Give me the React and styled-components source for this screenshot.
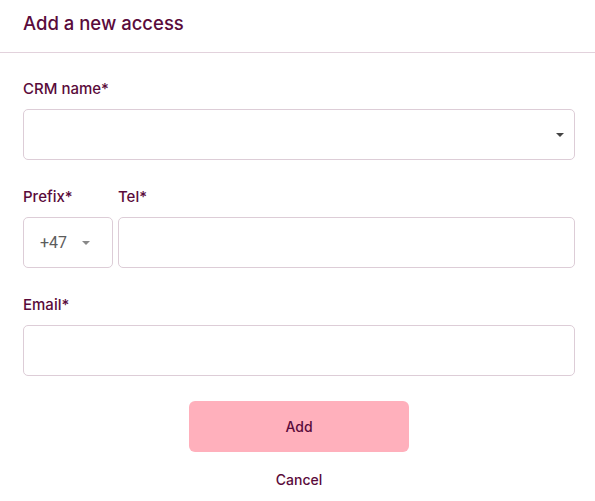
import React from "react";
import styled, { createGlobalStyle } from "styled-components";

const GlobalStyle = createGlobalStyle`
	body {
		margin: 0;
		background: #ffffff;
		font-family: Inter, "Liberation Sans", sans-serif;
	}
`;

const Header = styled.div`
	height: 53px;
	box-sizing: border-box;
	padding: 11px 23px 0;
	border-bottom: 1px solid #e2d2dc;
`;

const Title = styled.h2`
	margin: 0;
	font-size: 18.5px;
	line-height: 24px;
	font-weight: 500;
	color: #5a0b3b;
`;

const Form = styled.form`
	padding: 27px 20px 0 23px;
`;

const Field = styled.div`
	margin-bottom: 28px;
`;

const Row = styled.div`
	display: flex;
	gap: 5px;
	margin-bottom: 28px;
`;

const Label = styled.label`
	display: block;
	font-size: 15px;
	line-height: 18px;
	font-weight: 500;
	color: #5a0b3b;
	margin-bottom: 11px;
`;

const Box = styled.div`
	box-sizing: border-box;
	height: 51px;
	width: ${(p) => p.width || "100%"};
	border: 1px solid #ddcdd7;
	border-radius: 5px;
	display: flex;
	align-items: center;
	padding: 0 16px;
	font-family: Roboto, "Liberation Sans", sans-serif;
	font-size: 16px;
	color: #5c5c5c;
`;

const Caret = styled.span`
	margin-left: auto;
	width: 0;
	height: 0;
	border-left: 4px solid transparent;
	border-right: 4px solid transparent;
	border-top: 4px solid ${(p) => p.color || "#444"};
	margin-right: ${(p) => p.right || "0"};
`;

const Actions = styled.div`
	display: flex;
	flex-direction: column;
	align-items: center;
	margin-top: -3px;
`;

const AddButton = styled.button`
	width: 220px;
	height: 51px;
	border: none;
	border-radius: 6px;
	background: #ffb0bc;
	font-family: inherit;
	font-size: 14px;
	font-weight: 500;
	color: #5a0b3b;
`;

const Cancel = styled.button`
	margin-top: 18px;
	border: none;
	background: none;
	font-family: inherit;
	font-size: 14px;
	font-weight: 500;
	color: #5a0b3b;
`;

export default function App() {
	return (
		<>
			<GlobalStyle />
			<Header>
				<Title>Add a new access</Title>
			</Header>
			<Form>
				<Field>
					<Label>CRM name*</Label>
					<Box>
						<Caret right="-6px" />
					</Box>
				</Field>
				<Row>
					<div>
						<Label>Prefix*</Label>
						<Box width="90px">
							+47
							<Caret color="#888" right="6px" />
						</Box>
					</div>
					<div style={{ flex: 1 }}>
						<Label>Tel*</Label>
						<Box />
					</div>
				</Row>
				<Field>
					<Label>Email*</Label>
					<Box />
				</Field>
				<Actions>
					<AddButton type="button">Add</AddButton>
					<Cancel type="button">Cancel</Cancel>
				</Actions>
			</Form>
		</>
	);
}
